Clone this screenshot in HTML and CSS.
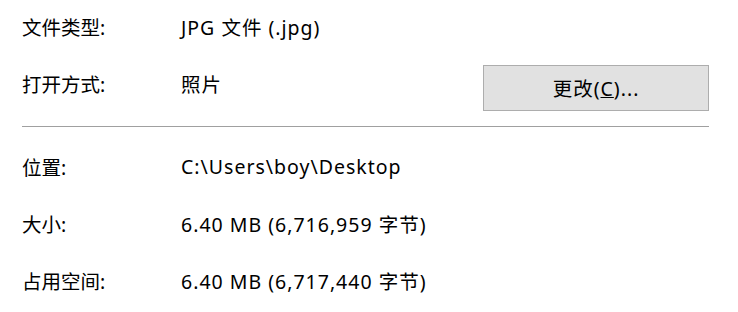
FILE: index.html
```html
<!DOCTYPE html>
<html lang="zh-CN">
<head>
  <meta charset="UTF-8">
  <title>属性</title>
  <link rel="stylesheet" href="styles.css">
</head>
<body>
  <div class="props">
    <div class="row">
      <div class="label">文件类型:</div>
      <div class="value">JPG 文件 (.jpg)</div>
    </div>
    <div class="row">
      <div class="label">打开方式:</div>
      <div class="value">照片</div>
      <button class="change-btn" type="button">更改(<u>C</u>)...</button>
    </div>
    <div class="sep"></div>
    <div class="row">
      <div class="label">位置:</div>
      <div class="value">C:\Users\boy\Desktop</div>
    </div>
    <div class="row">
      <div class="label">大小:</div>
      <div class="value">6.40 MB (6,716,959 字节)</div>
    </div>
    <div class="row">
      <div class="label">占用空间:</div>
      <div class="value">6.40 MB (6,717,440 字节)</div>
    </div>
  </div>
</body>
</html>
```
FILE: styles.css
```css
body {
  margin: 0;
  background: #ffffff;
  font-family: "Noto Sans", "Noto Sans CJK SC", sans-serif;
  font-size: 19.5px;
  color: #000000;
}
.props {
  width: 687px;
  padding-left: 22px;
}
.row {
  display: flex;
  align-items: center;
  height: 57px;
  box-sizing: border-box;
  padding-bottom: 4px;
}
.label {
  width: 159px;
  flex: none;
}
.value {
  flex: 1;
  white-space: nowrap;
  letter-spacing: 1px;
}
.change-btn {
  width: 226px;
  height: 46px;
  margin-top: 8px;
  border: 1px solid #adadad;
  background: #e1e1e1;
  font-family: inherit;
  font-size: 19.5px;
  letter-spacing: 1px;
  color: #000000;
  padding: 0;
}
.sep {
  height: 1px;
  background: #a0a0a0;
  margin: 12px 0 13px 0;
}
```
